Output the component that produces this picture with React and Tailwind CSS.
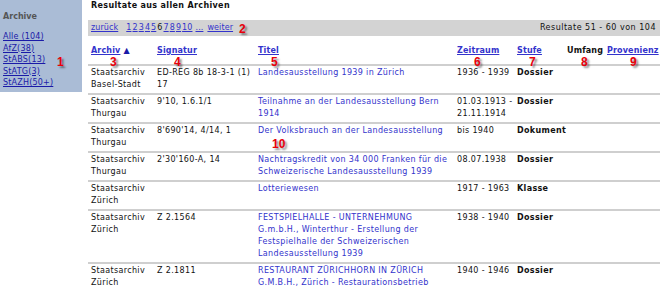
const rows = [
  { archiv: 'Staatsarchiv Basel-Stadt', sig: 'ED-REG 8b 18-3-1 (1) 17', titel: 'Landesausstellung 1939 in Zürich', zeit: '1936 - 1939', stufe: 'Dossier' },
  { archiv: 'Staatsarchiv Thurgau', sig: "9'10, 1.6.1/1", titel: 'Teilnahme an der Landesausstellung Bern 1914', zeit: '01.03.1913 - 21.11.1914', stufe: 'Dossier' },
  { archiv: 'Staatsarchiv Thurgau', sig: "8'690'14, 4/14, 1", titel: 'Der Volksbrauch an der Landesausstellung', zeit: 'bis 1940', stufe: 'Dokument' },
  { archiv: 'Staatsarchiv Thurgau', sig: "2'30'160-A, 14", titel: 'Nachtragskredit von 34 000 Franken für die Schweizerische Landesausstellung 1939', zeit: '08.07.1938', stufe: 'Dossier' },
  { archiv: 'Staatsarchiv Zürich', sig: '', titel: 'Lotteriewesen', zeit: '1917 - 1963', stufe: 'Klasse' },
  { archiv: 'Staatsarchiv Zürich', sig: 'Z 2.1564', titel: 'FESTSPIELHALLE - UNTERNEHMUNG G.m.b.H., Winterthur - Erstellung der Festspielhalle der Schweizerischen Landesausstellung 1939', zeit: '1938 - 1940', stufe: 'Dossier' },
  { archiv: 'Staatsarchiv Zürich', sig: 'Z 2.1811', titel: 'RESTAURANT ZÜRICHHORN IN ZÜRICH G.M.B.H., Zürich - Restaurationsbetrieb', zeit: '1940 - 1946', stufe: 'Dossier' },
]

const archive = ['Alle (104)', 'AfZ(38)', 'StABS(13)', 'StATG(3)', 'StAZH(50+)']

// red annotation markers laid over the screenshot
const marks = [
  { n: '1', cls: 'left-[57px] top-[56px]' },
  { n: '2', cls: 'left-[239px] top-[23px]' },
  { n: '3', cls: 'left-[110px] top-[56px]' },
  { n: '4', cls: 'left-[174px] top-[56px]' },
  { n: '5', cls: 'left-[271px] top-[56px]' },
  { n: '6', cls: 'left-[474px] top-[56px]' },
  { n: '7', cls: 'left-[529px] top-[56px]' },
  { n: '8', cls: 'left-[581px] top-[56px]' },
  { n: '9', cls: 'left-[630px] top-[56px]' },
  { n: '10', cls: 'left-[272px] top-[138px]' },
]

const link = 'text-[#3333cc] underline'
const th = 'px-[3px] pt-[9px] pb-[7px] whitespace-nowrap'
const td = 'px-[3px] pt-[1px] pb-[2px]'

const App = () => {
  return (
    <div className="relative flex w-[660px] h-[289px] overflow-hidden bg-white text-[8px] leading-[12px] tracking-[0.35px] text-[#111] font-['DejaVu_Sans',sans-serif]">
      {/* Sidebar */}
      <aside className="w-[82px] h-[92px] shrink-0 bg-[#aabcd6] pl-[3px] pt-[11px] tracking-[0.2px]">
        <div className="font-bold text-[#555] tracking-normal">Archive</div>
        <ul className="mt-[8px] leading-[11.5px]">
          {archive.map(a => (
            <li key={a}><a className="text-[#1a1aa8] underline">{a}</a></li>
          ))}
        </ul>
      </aside>

      {/* Main */}
      <main className="ml-[6px] flex-1">
        <h1 className="font-bold pl-[3px]">Resultate aus allen Archiven</h1>

        <div className="mt-[8px] h-[16px] bg-[#d3d3d3] flex items-center justify-between px-[3px]">
          <div className="flex items-center tracking-[0.1px]">
            <a className={link}>zurück</a>
            <div className="flex gap-[1px] ml-[8px]">
              {['1', '2', '3', '4', '5'].map(p => <a key={p} className={link}>{p}</a>)}
              <span>6</span>
              {['7', '8', '9', '10'].map(p => <a key={p} className={link}>{p}</a>)}
            </div>
            <a className={`${link} ml-[3px]`}>...</a>
            <a className={`${link} ml-[4px]`}>weiter</a>
          </div>
          <span className="pr-[1px] tracking-[0.5px]">Resultate 51 - 60 von 104</span>
        </div>

        <table className="table-fixed border-collapse w-[572px]">
          <colgroup>
            <col className="w-[66px]" />
            <col className="w-[101px]" />
            <col className="w-[199px]" />
            <col className="w-[60px]" />
            <col className="w-[50px]" />
            <col className="w-[40px]" />
            <col className="w-[56px]" />
          </colgroup>
          <thead>
            <tr className="border-b-2 border-[#cfcfcf] font-bold text-left tracking-[0.15px]">
              <th className={th}>
                <a className={link}>Archiv</a> <span className="text-[#1a1aa8]">▲</span>
              </th>
              <th className={th}><a className={link}>Signatur</a></th>
              <th className={th}><a className={link}>Titel</a></th>
              <th className={th}><a className={link}>Zeitraum</a></th>
              <th className={th}><a className={link}>Stufe</a></th>
              <th className={th}>Umfang</th>
              <th className={th}><a className={link}>Provenienz</a></th>
            </tr>
          </thead>
          <tbody>
            {rows.map((r, i) => (
              <tr key={i} className="border-b-2 border-[#cfcfcf] align-top">
                <td className={td}>{r.archiv}</td>
                <td className={`${td} pr-0`}>{r.sig}</td>
                <td className={`${td} text-[#3333cc]`}>{r.titel}</td>
                <td className={`${td} pr-0`}>{r.zeit}</td>
                <td className={`${td} font-bold`}>{r.stufe}</td>
                <td className={td}></td>
                <td className={td}></td>
              </tr>
            ))}
          </tbody>
        </table>
      </main>

      {marks.map(m => (
        <span
          key={m.n}
          className={`absolute ${m.cls} text-[12px] leading-[12px] tracking-normal font-bold text-[#e8000a] font-['Liberation_Sans',sans-serif] [text-shadow:2px_2px_2px_rgba(0,0,0,0.45)]`}
        >
          {m.n}
        </span>
      ))}
    </div>
  )
}

export default App
